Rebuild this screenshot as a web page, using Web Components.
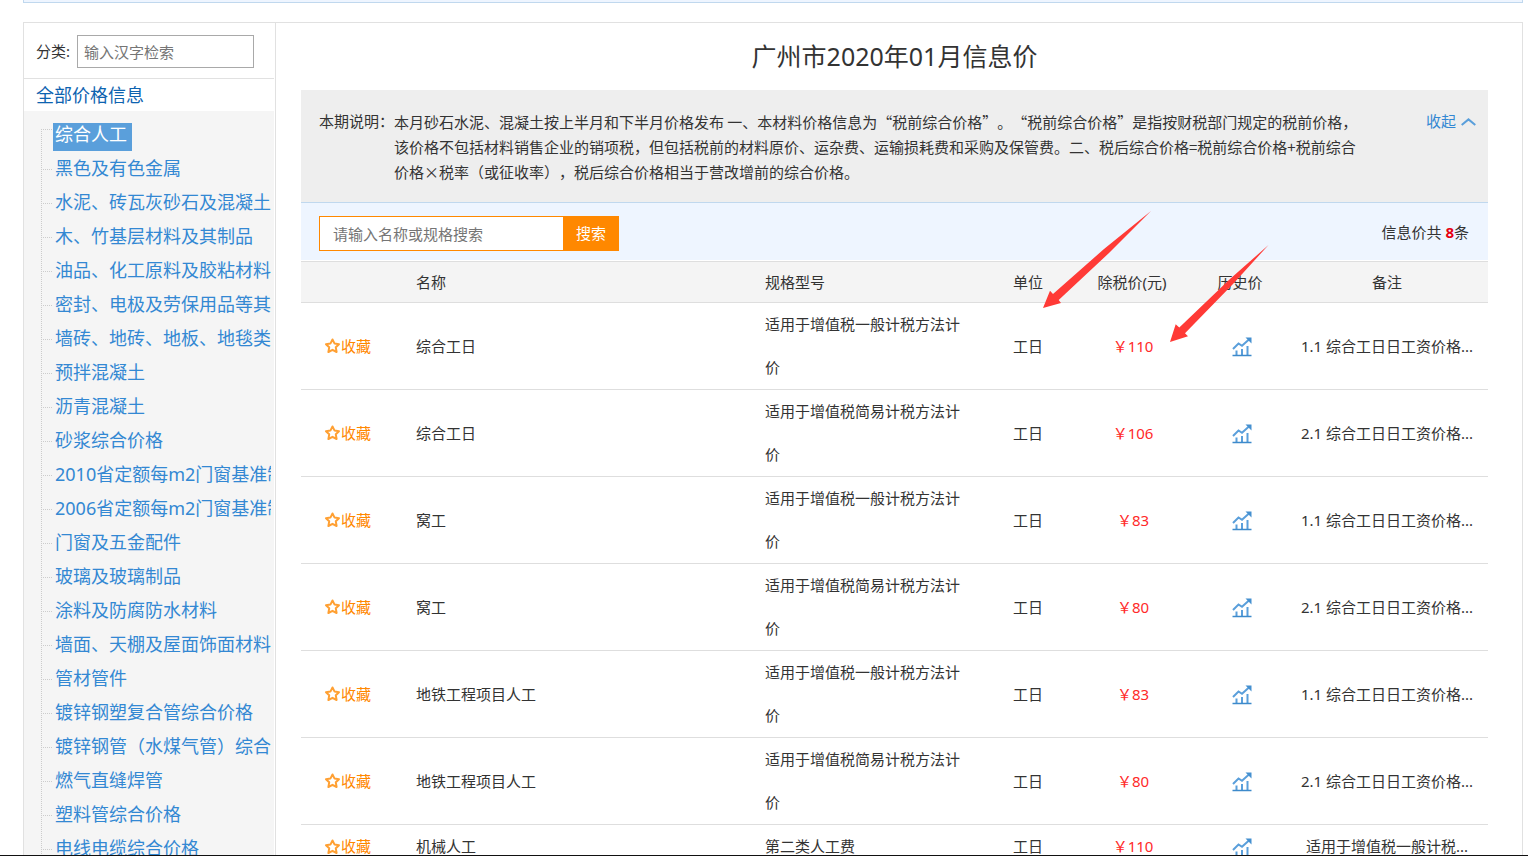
<!DOCTYPE html>
<html lang="zh-CN">
<head>
<meta charset="utf-8">
<meta name="viewport" content="width=device-width, initial-scale=1">
<title>广州市2020年01月信息价</title>
<style>
  html, body { margin: 0; height: 100%; }
  body { background: #fff; color: #333; font: 15px/25px "Noto Sans", "Noto Sans CJK SC", sans-serif; overflow: hidden; }
</style>
</head>
<body>
<price-page>
  <category-sidebar slot="side"></category-sidebar>
  <price-panel slot="main">
    <span slot="title">广州市2020年01月信息价</span>
    <notice-box slot="notice">本月砂石水泥、混凝土按上半月和下半月价格发布 一、本材料价格信息为“税前综合价格”。“税前综合价格”是指按财税部门规定的税前价格，该价格不包括材料销售企业的销项税，但包括税前的材料原价、运杂费、运输损耗费和采购及保管费。二、税后综合价格=税前综合价格+税前综合价格×税率（或征收率），税后综合价格相当于营改增前的综合价格。</notice-box>
    <search-bar slot="search" count="8"></search-bar>
    <price-table slot="table"></price-table>
  </price-panel>
</price-page>

<script>
function define(name, html, setup) {
  const template = document.createElement('template');
  template.innerHTML = '<style>:host,*{box-sizing:border-box}</style>' + html;
  customElements.define(name, class extends HTMLElement {
    constructor() {
      super();
      this.attachShadow({ mode: 'open' }).append(template.content.cloneNode(true));
    }
    connectedCallback() { if (setup) setup(this, this.shadowRoot); }
  });
}

define('price-page', `
<style>
  :host { display: flex; flex-direction: column; height: 100vh; }
  .view { flex: 1; min-height: 0; overflow: hidden; display: flex; flex-direction: column; padding: 0 5px 0 23px; }
  .crumb { flex: none; height: 3px; background: #eef5ff; border: 1px solid #c0d8ee; border-top: 0; }
  .frame { flex: 1; min-height: 0; margin-top: 19px; display: flex; border: 1px solid #e1e1e1; border-bottom: 0; }
  .side { flex: none; width: 252px; padding-right: 1px; border-right: 1px solid #e1e1e1; overflow: hidden; }
  main { flex: 1; min-width: 0; overflow: hidden; padding: 0 34px 0 25px; }
  footer { flex: none; height: 1px; background: #111; }
</style>
<div class="view">
  <div class="crumb"></div>
  <div class="frame">
    <div class="side"><slot name="side"></slot></div>
    <main><slot name="main"></slot></main>
  </div>
</div>
<footer></footer>`);

define('category-sidebar', `
<style>
  :host { display: block; }
  .find { display: flex; align-items: center; gap: 7px; height: 56px; padding: 2px 0 0 12px; border-bottom: 1px solid #e1e1e1; }
  input { width: 177px; height: 33px; border: 1px solid #a9a9a9; padding: 0 6px; font: inherit; color: #333; background: #fff; border-radius: 0; }
  input::placeholder { color: #757575; opacity: 1; }
  h2 { margin: 0; height: 32px; line-height: 32px; padding-left: 12px; font-size: 18px; font-weight: 400; }
  h2 a { color: #0d63b0; text-decoration: none; }
</style>
<div class="find"><label for="q">分类:</label><input id="q" type="text" placeholder="输入汉字检索"></div>
<h2><a href="#all">全部价格信息</a></h2>
<category-tree></category-tree>`);

const categories = ['综合人工', '黑色及有色金属', '水泥、砖瓦灰砂石及混凝土制品', '木、竹基层材料及其制品',
  '油品、化工原料及胶粘材料', '密封、电极及劳保用品等其它材料', '墙砖、地砖、地板、地毯类材料', '预拌混凝土', '沥青混凝土',
  '砂浆综合价格', '2010省定额每m2门窗基准制品', '2006省定额每m2门窗基准制品', '门窗及五金配件', '玻璃及玻璃制品',
  '涂料及防腐防水材料', '墙面、天棚及屋面饰面材料', '管材管件', '镀锌钢塑复合管综合价格', '镀锌钢管（水煤气管）综合价格',
  '燃气直缝焊管', '塑料管综合价格', '电线电缆综合价格'];

define('category-tree', `
<style>
  :host { display: block; background: #f5f5f5; padding: 6px 3px 0 17px; }
  ul { list-style: none; margin: 0; padding: 0; overflow: hidden; }
  li { display: flex; height: 34px; }
  li::before { content: ""; flex: none; width: 12px; height: 34px;
    background: repeating-linear-gradient(to bottom, #ccc 0 1px, transparent 1px 2px) 0 0 / 1px 100% no-repeat,
                repeating-linear-gradient(to right, #ccc 0 1px, transparent 1px 2px) 0 18px / 11px 1px no-repeat; }
  li:first-child::before { margin-top: 12px; height: 22px; background-position: 0 0, 0 0; }
  a { height: 28px; margin-top: 6px; padding: 0 5px 0 2px; font-size: 18px; line-height: 22px; color: #3388d3; text-decoration: none; white-space: nowrap; }
  a[aria-current] { background: #5a9fdb; color: #fff; }
</style>
<ul></ul>`, (host, root) => {
  root.querySelector('ul').innerHTML = categories.map((c, i) =>
    `<li><a href="#c${i}"${i ? '' : ' aria-current="true"'}>${c}</a></li>`).join('');
});

define('price-panel', `
<style>
  :host { display: block; }
  h1 { margin: 0; height: 67px; line-height: 67px; font-size: 25px; font-weight: 400; text-align: center; }
  .body { position: relative; }
  .marks { position: absolute; top: 120px; right: 218px; pointer-events: none; }
</style>
<h1><slot name="title"></slot></h1>
<div class="body">
  <slot name="notice"></slot>
  <slot name="search"></slot>
  <slot name="table"></slot>
  <svg class="marks" width="230" height="135" viewBox="1040 210 230 135" fill="#ff3a36" aria-hidden="true">
    <path d="M1043 308L1050 290.7L1053 294L1104 249L1151 211L1109 253L1058.7 300L1061 303Z"/>
    <path d="M1170 342L1175.7 324.3L1179.3 327.5L1230 279L1268.5 245L1233 284L1185 333.3L1188 336.3Z"/>
  </svg>
</div>`);

define('notice-box', `
<style>
  :host { display: flex; background: #eee; padding: 19px 12px 18px 18px; }
  .label { flex: none; width: 75px; }
  p { flex: 1; margin: 0; padding-right: 60px; font-family: "Noto Sans CJK SC", sans-serif; text-spacing-trim: space-all; }
  a { flex: none; display: flex; align-items: center; gap: 5px; height: 25px; color: #3388d3; text-decoration: none; }
</style>
<span class="label">本期说明：</span>
<p><slot></slot></p>
<a href="#fold">收起<svg width="15" height="8" viewBox="0 0 15 8" fill="none" stroke="#5a9fdb" stroke-width="2"><path d="M.7 7L7.5 1.4L14.3 7"/></svg></a>`);

define('search-bar', `
<style>
  :host { display: flex; justify-content: space-between; align-items: flex-start; background: #eef5ff; border-top: 1px solid #c0d8ee; height: 58px; padding: 13px 19px 0 18px; }
  form { display: flex; width: 300px; height: 35px; }
  input { flex: 1; min-width: 0; height: 35px; padding: 0 13px; border: 1px solid #ff8800; border-right: 0; border-radius: 0; font: inherit; color: #333; background: #fff; }
  input::placeholder { color: #757575; opacity: 1; }
  button { width: 56px; height: 35px; border: 0; padding: 0; background: #ff8800; color: #fff; font: inherit; }
  p { margin: 0; line-height: 33px; }
  b { color: #e60012; }
</style>
<form><input type="text" aria-label="请输入名称或规格搜索" placeholder="请输入名称或规格搜索"><button type="button">搜索</button></form>
<p>信息价共 <b></b>条</p>`, (host, root) => {
  root.querySelector('b').textContent = host.getAttribute('count');
});

define('star-button', `
<style>
  :host { display: inline-block; }
  button { display: flex; align-items: center; gap: 1px; border: 0; padding: 0; background: none; color: #ff8800; font: inherit; }
</style>
<button type="button"><svg width="16" height="16" viewBox="0 0 16 16" fill="none" stroke="#ffa033" stroke-width="2" stroke-linejoin="round"><path d="M8.500 1.5L10.600 5.6L15 6.2L11.800 9.3L12.600 14L8.500 11.8L4.400 14L5.200 9.3L2 6.2L6.400 5.6Z"/></svg>收藏</button>`);

define('trend-button', `
<style>
  :host { display: inline-block; vertical-align: middle; }
  button { display: block; border: 0; padding: 0; background: none; }
  svg { display: block; }
</style>
<button type="button" aria-label="历史价"><svg width="20" height="20" viewBox="0 0 20 20" fill="none">
  <path d="M1 12L6.5 6.5L10 8.8L17.5 2" stroke="#5a9fdb" stroke-width="2"/>
  <path d="M13.5 .5H19.5V6.5Z" fill="#4590d0"/>
  <path d="M4.5 18V13.5M10 18V12M15.5 18V9" stroke="#5a9fdb" stroke-width="2"/>
  <path d="M.5 18.5H19.5" stroke="#3d8acb" stroke-width="1.5"/>
</svg></button>`);

const general = '适用于增值税一般计税方法计价', simple = '适用于增值税简易计税方法计价';
const note1 = '1.1 综合工日日工资价格...', note2 = '2.1 综合工日日工资价格...';
const prices = [
  ['综合工日', general, '工日', 110, note1],
  ['综合工日', simple, '工日', 106, note2],
  ['窝工', general, '工日', 83, note1],
  ['窝工', simple, '工日', 80, note2],
  ['地铁工程项目人工', general, '工日', 83, note1],
  ['地铁工程项目人工', simple, '工日', 80, note2],
  ['机械人工', '第二类人工费', '工日', 110, '适用于增值税一般计税...']
];

define('price-table', `
<style>
  :host { display: block; border-top: 1px solid #dedede; margin-top: 1px; }
  table { width: 100%; table-layout: fixed; border-collapse: separate; border-spacing: 0; }
  .fav { width: 95px; } .spec { width: 241px; } .unit { width: 84px; }
  .price { width: 124px; } .hist { width: 92px; } .note { width: 202px; }
  th, td { padding: 0; font-weight: 400; text-align: center; border-bottom: 1px solid #dedede; vertical-align: middle; }
  th { height: 41px; background: #f4f4f4; }
  td { line-height: 43px; white-space: nowrap; }
  td star-button { display: block; padding-left: 23px; }
  .left { text-align: left; padding: 0 20px; white-space: normal; }
  td.cost { color: #ff2a2a; padding-left: 2px; }
  td.trend { padding-left: 4px; }
</style>
<table>
  <colgroup><col class="fav"><col><col class="spec"><col class="unit"><col class="price"><col class="hist"><col class="note"></colgroup>
  <thead><tr><th></th><th class="left">名称</th><th class="left">规格型号</th><th>单位</th><th>除税价(元)</th><th>历史价</th><th>备注</th></tr></thead>
  <tbody></tbody>
</table>`, (host, root) => {
  root.querySelector('tbody').innerHTML = prices.map(([name, spec, unit, cost, note]) => `<tr>
    <td><star-button></star-button></td><td class="left">${name}</td><td class="left">${spec}</td>
    <td>${unit}</td><td class="cost">￥${cost}</td><td class="trend"><trend-button></trend-button></td><td>${note}</td></tr>`).join('');
});
</script>
</body>
</html>
